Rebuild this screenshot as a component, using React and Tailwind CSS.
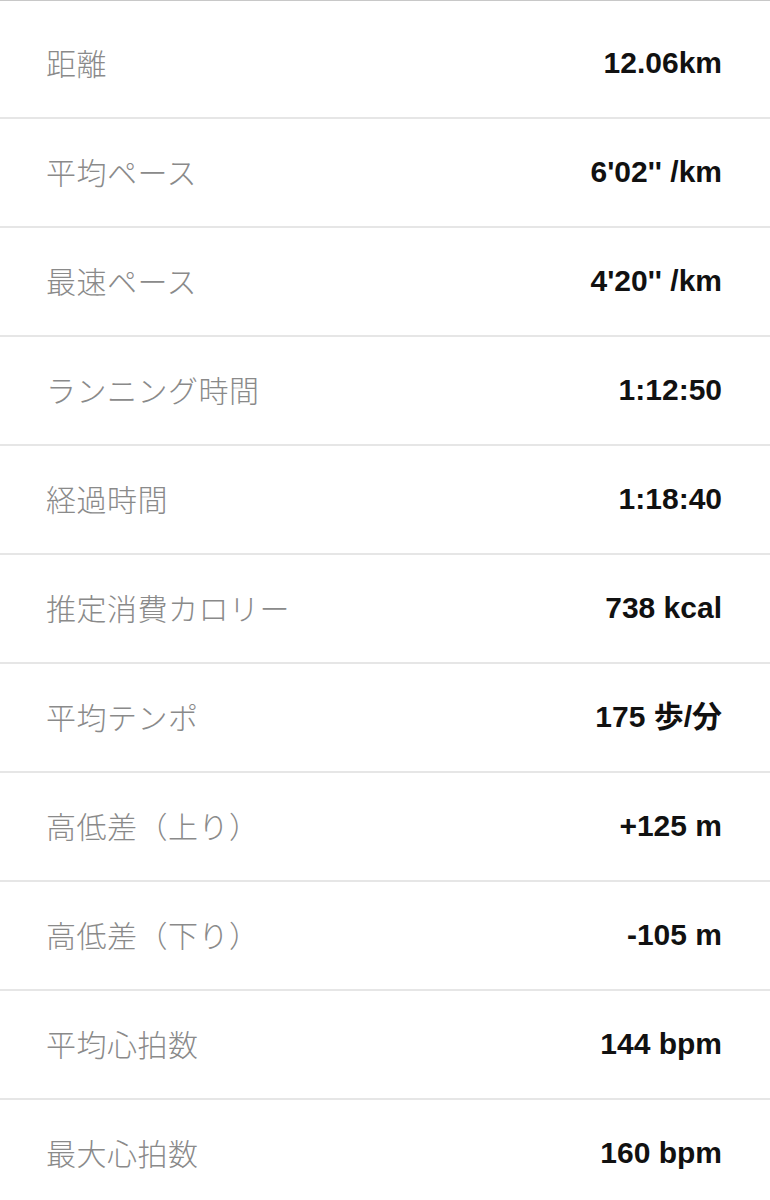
import React from "react";

const rows = [
  ["距離", "12.06km"],
  ["平均ペース", "6'02'' /km"],
  ["最速ペース", "4'20'' /km"],
  ["ランニング時間", "1:12:50"],
  ["経過時間", "1:18:40"],
  ["推定消費カロリー", "738 kcal"],
  ["平均テンポ", "175 歩/分"],
  ["高低差（上り）", "+125 m"],
  ["高低差（下り）", "-105 m"],
  ["平均心拍数", "144 bpm"],
  ["最大心拍数", "160 bpm"],
];

export default function App() {
  return (
    <div className="w-[770px] h-[1200px] overflow-hidden bg-white border-t border-[#c8c8c8] pt-[9px]">
      {rows.map(([label, value], i) => (
        <div
          key={i}
          className="h-[109px] flex items-center justify-between pl-[46px] pr-[48px] border-b-2 border-[#e6e6e6]"
        >
          <span
            className="text-[30px] text-[#8a8a8a] font-light leading-none -mt-[3px] tracking-[0.5px]"
            style={{ fontFamily: '"Noto Sans CJK JP", sans-serif' }}
          >
            {label}
          </span>
          <span
            className="text-[30px] text-[#111111] font-bold leading-none -mt-[1px]"
            style={{ fontFamily: '"Liberation Sans", "Noto Sans CJK JP", sans-serif' }}
          >
            {value}
          </span>
        </div>
      ))}
    </div>
  );
}
